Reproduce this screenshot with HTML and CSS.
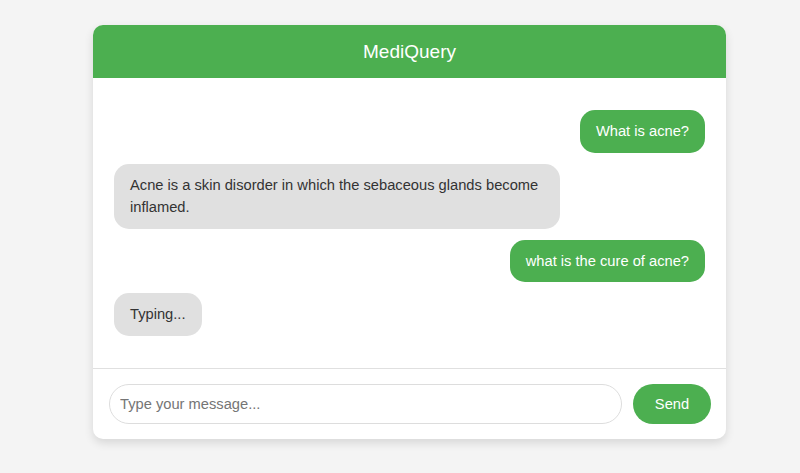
FILE: index.html
```html
<!DOCTYPE html>
<html lang="en">
<head>
<meta charset="utf-8">
<title>MediQuery</title>
<link rel="stylesheet" href="styles.css">
</head>
<body>
<div class="chat-container">
  <div class="chat-header">MediQuery</div>
  <div class="chat-box">
    <div class="message user">What is acne?</div>
    <div class="message bot">Acne is a skin disorder in which the sebaceous glands become inflamed.</div>
    <div class="message user">what is the cure of acne?</div>
    <div class="message bot">Typing...</div>
  </div>
  <div class="chat-input">
    <input type="text" class="msg-input" placeholder="Type your message...">
    <button class="send-btn">Send</button>
  </div>
</div>
</body>
</html>
```
FILE: styles.css
```css
html, body {
  margin: 0;
  padding: 0;
}
body {
  background: #f4f4f4;
  font-family: "Liberation Sans", Arial, sans-serif;
  padding: 25px 0 0 93px;
  height: 473px;
  box-sizing: border-box;
  overflow: hidden;
}
.chat-container {
  width: 633px;
  background: #fff;
  border-radius: 10px;
  box-shadow: 0 4px 10px rgba(0, 0, 0, 0.12);
  overflow: hidden;
}
.chat-header {
  background: #4caf50;
  color: #fff;
  text-align: center;
  font-size: 19px;
  line-height: 25px;
  padding: 14px 0;
}
.chat-box {
  display: flex;
  flex-direction: column;
  gap: 11px;
  padding: 32px 21px 32px 21px;
  border-bottom: 1px solid #e0e0e0;
}
.message {
  max-width: 70%;
  padding: 10px 16px;
  border-radius: 15px;
  font-size: 14.7px;
  line-height: 22.5px;
}
.user {
  align-self: flex-end;
  background: #4caf50;
  color: #fff;
}
.bot {
  align-self: flex-start;
  background: #e0e0e0;
  color: #333;
}
.chat-input {
  display: flex;
  gap: 11px;
  padding: 15px 15px 15px 16px;
}
.msg-input {
  flex: 1;
  height: 40px;
  box-sizing: border-box;
  border: 1px solid #ddd;
  border-radius: 20px;
  padding: 0 10px;
  font-family: "Liberation Sans", Arial, sans-serif;
  font-size: 14.7px;
  color: #333;
  outline: none;
}
.msg-input::placeholder {
  color: #757575;
}
.send-btn {
  width: 78px;
  height: 40px;
  border: none;
  border-radius: 20px;
  background: #4caf50;
  color: #fff;
  font-family: "Liberation Sans", Arial, sans-serif;
  font-size: 14.7px;
  padding: 0;
}
```
